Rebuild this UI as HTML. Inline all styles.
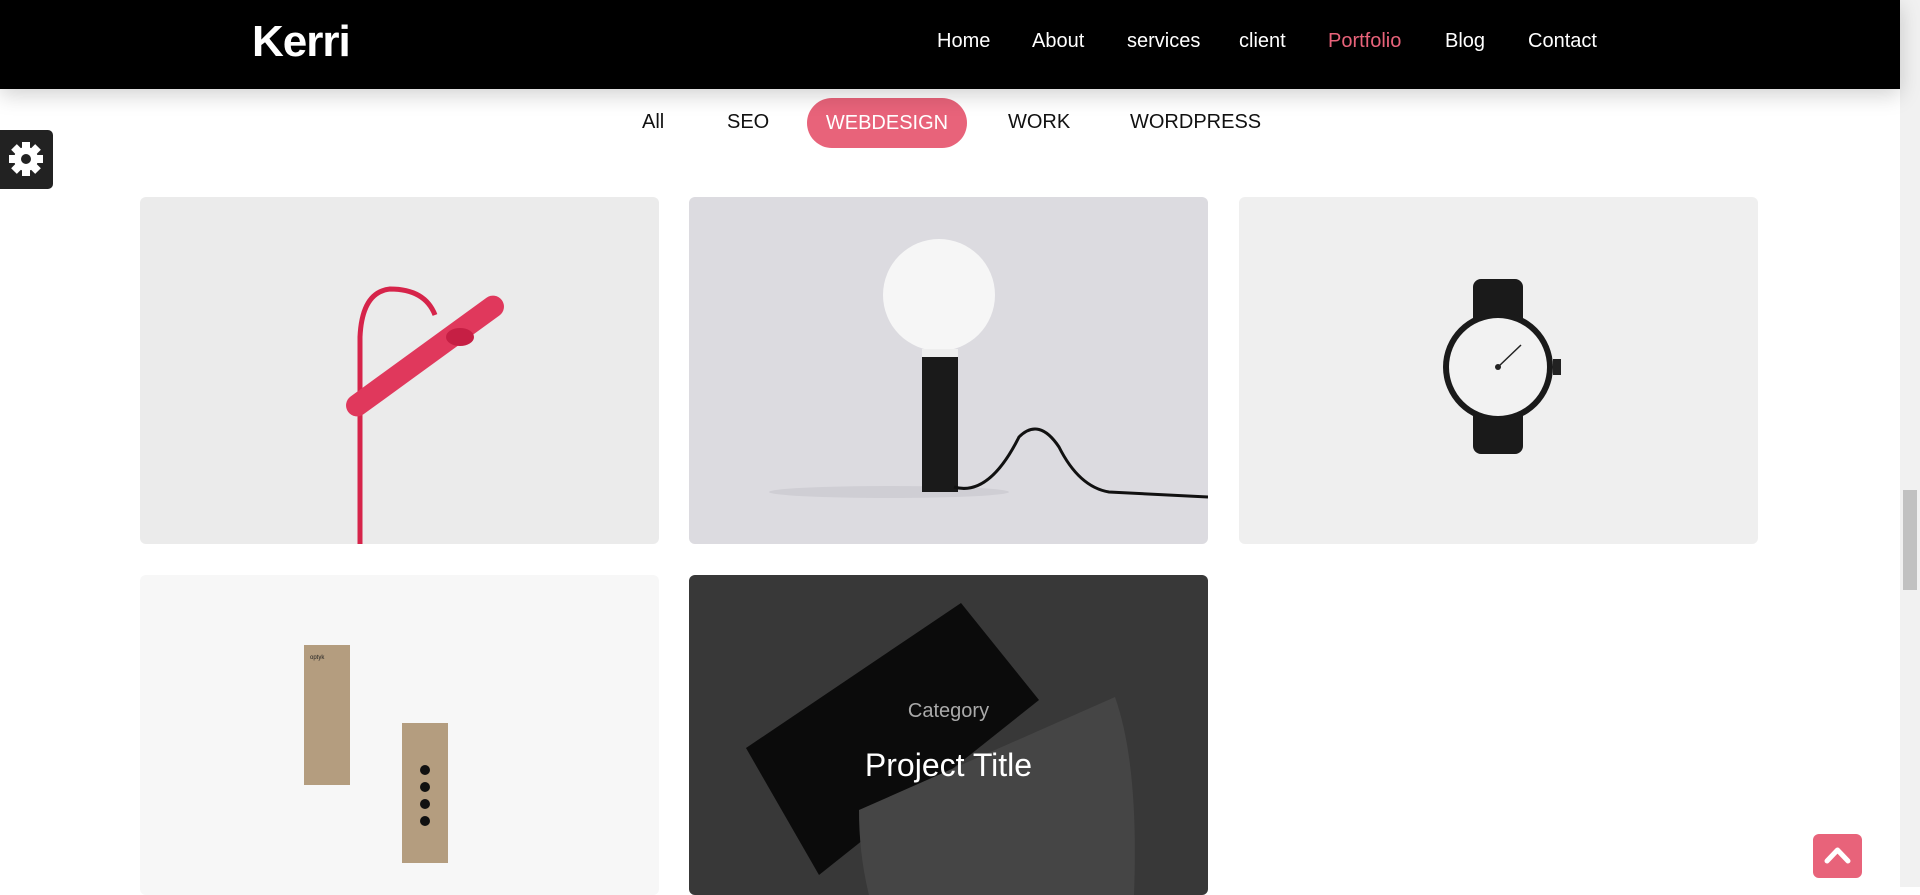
<!DOCTYPE html>
<html><head><meta charset="utf-8"><style>
*{margin:0;padding:0;box-sizing:border-box}
body{width:1920px;height:887px;overflow:hidden;background:#fff;font-family:"Liberation Sans",sans-serif;position:relative}
.hdr{position:absolute;left:0;top:0;width:1900px;height:89px;background:#000;box-shadow:0 6px 20px rgba(0,0,0,.18);z-index:5}
.logo{position:absolute;left:252px;top:17px;color:#fff;font-weight:bold;font-size:44px;letter-spacing:-1px}
.nav a{position:absolute;top:30px;color:#fff;font-size:20px;text-decoration:none}
.f{position:absolute;top:111px;font-size:20px;color:#111}
.pill{position:absolute;left:807px;top:98px;width:160px;height:50px;border-radius:25px;background:#e8637a;color:#fff;font-size:20px;text-align:center;line-height:50px}
.card{position:absolute;width:519px;border-radius:6px;overflow:hidden}
.sb{position:absolute;right:0;top:0;width:20px;height:887px;background:#f1f1f1}
</style></head><body>
<div class="hdr">
<div class="logo">Kerri</div>
<div class="nav">
<a style="left:937px">Home</a><a style="left:1032px">About</a><a style="left:1127px">services</a><a style="left:1239px">client</a><a style="left:1328px;color:#e8637a">Portfolio</a><a style="left:1445px">Blog</a><a style="left:1528px">Contact</a>
</div></div>
<span class="f" style="left:642px">All</span>
<span class="f" style="left:727px">SEO</span>
<div class="pill">WEBDESIGN</div>
<span class="f" style="left:1008px">WORK</span>
<span class="f" style="left:1130px">WORDPRESS</span>
<div style="position:absolute;left:0;top:130px;width:53px;height:59px;background:#222;border-radius:0 5px 5px 0">
<svg width="53" height="59" viewBox="0 0 53 59"><g transform="translate(26 29)" fill="#fff"><circle r="12"/><g><rect x="-4" y="-17" width="8" height="34"/><rect x="-4" y="-17" width="8" height="34" transform="rotate(45)"/><rect x="-4" y="-17" width="8" height="34" transform="rotate(90)"/><rect x="-4" y="-17" width="8" height="34" transform="rotate(135)"/></g><circle r="5" fill="#222"/></g></svg></div>

<div class="card" style="left:140px;top:197px;height:347px;background:#ebebeb">
<svg width="519" height="347"><path d="M220 347 V140 Q222 95 250 92 Q285 92 295 118" stroke="#d6244a" stroke-width="5" fill="none"/><rect x="190" y="148" width="190" height="22" rx="11" fill="#e0385c" transform="rotate(-36 285 159)"/><ellipse cx="320" cy="140" rx="14" ry="9" fill="#c61f44"/></svg></div>

<div class="card" style="left:689px;top:197px;height:347px;background:#dcdbe0">
<svg width="519" height="347"><ellipse cx="200" cy="295" rx="120" ry="6" fill="#cfced4"/><circle cx="250" cy="98" r="56" fill="#f6f6f6"/><rect x="233" y="152" width="36" height="8" fill="#eee"/><rect x="233" y="160" width="36" height="135" fill="#1a1a1a"/><path d="M265 290 Q300 300 330 240 Q350 220 370 250 Q390 290 420 295 L519 300" stroke="#111" stroke-width="3" fill="none"/></svg></div>

<div class="card" style="left:1239px;top:197px;height:347px;background:#efefef">
<svg width="519" height="347"><rect x="234" y="82" width="50" height="175" rx="8" fill="#1a1a1a"/><circle cx="259" cy="170" r="55" fill="#1a1a1a"/><circle cx="259" cy="170" r="49" fill="#f2f2f2"/><rect x="314" y="162" width="8" height="16" fill="#222"/><line x1="259" y1="170" x2="282" y2="148" stroke="#222" stroke-width="1.5"/><circle cx="259" cy="170" r="3" fill="#222"/></svg></div>

<div class="card" style="left:140px;top:575px;height:320px;background:#f7f7f7">
<svg width="519" height="320"><rect x="164" y="70" width="46" height="140" fill="#b49d7f"/><rect x="262" y="148" width="46" height="140" fill="#b49d7f"/><text x="170" y="84" font-size="6" fill="#222">optyk</text><g fill="#111"><circle cx="285" cy="195" r="5"/><circle cx="285" cy="212" r="5"/><circle cx="285" cy="229" r="5"/><circle cx="285" cy="246" r="5"/></g></svg></div>

<div class="card" style="left:689px;top:575px;height:320px;background:#383838">
<svg width="519" height="320" style="position:absolute;left:0;top:0"><path d="M57 173 L272 28 L350 125 L130 300 Z" fill="#0b0b0b"/><path d="M170 235 L426 122 Q450 190 445 320 L180 320 Q170 280 170 235Z" fill="#454545"/></svg>
<div style="position:absolute;top:125px;width:100%;text-align:center;color:#aaa;font-size:20px">Category</div>
<div style="position:absolute;top:172px;width:100%;text-align:center;color:#fff;font-size:32px">Project Title</div></div>

<div style="position:absolute;left:1813px;top:834px;width:49px;height:44px;background:#e8637a;border-radius:6px">
<svg width="49" height="44"><path d="M14 27 L24.5 16 L35 27" stroke="#fff" stroke-width="5" fill="none" stroke-linecap="round" stroke-linejoin="round"/></svg></div>
<div class="sb"><div style="position:absolute;left:3px;top:490px;width:14px;height:100px;background:#c1c1c1"></div></div>
</body></html>
